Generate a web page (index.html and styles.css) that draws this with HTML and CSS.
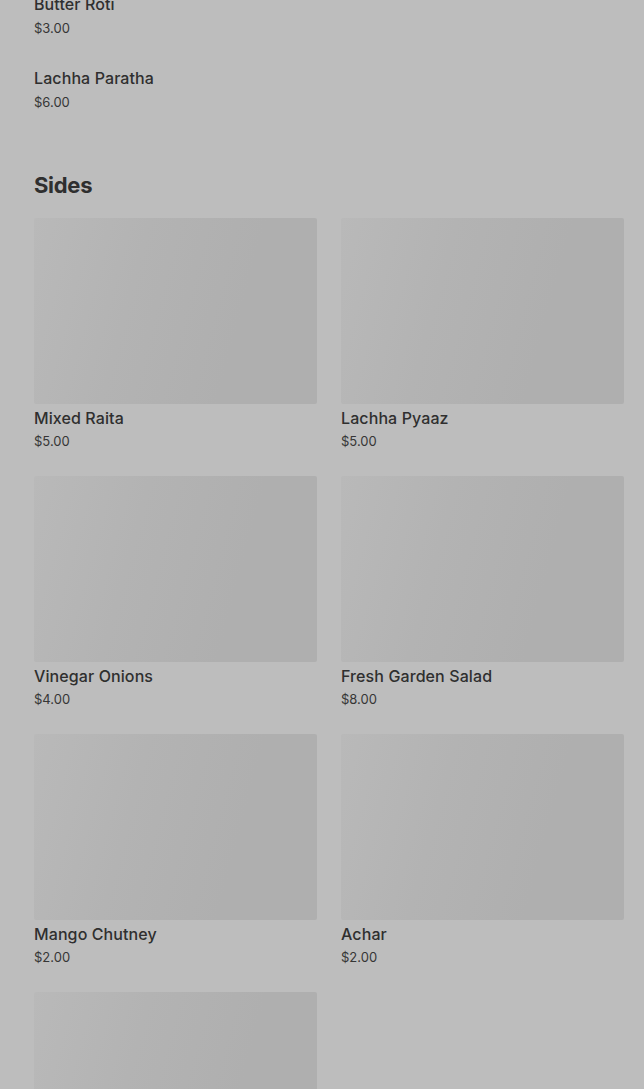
FILE: index.html
```html
<!DOCTYPE html>
<html lang="en">
<head>
  <meta charset="UTF-8">
  <meta name="viewport" content="width=device-width, initial-scale=1.0">
  <title>Menu</title>
  <link rel="stylesheet" href="styles.css">
</head>
<body>
  <div class="menu">
    <ul class="list">
      <li class="list-item">
        <div class="item-name">Butter Roti</div>
        <div class="item-price">$3.00</div>
      </li>
      <li class="list-item">
        <div class="item-name">Lachha Paratha</div>
        <div class="item-price">$6.00</div>
      </li>
    </ul>

    <section class="section">
      <h2 class="section-title">Sides</h2>
      <div class="grid">
        <div class="card">
          <div class="card-image"></div>
          <div class="item-name">Mixed Raita</div>
          <div class="item-price">$5.00</div>
        </div>
        <div class="card">
          <div class="card-image"></div>
          <div class="item-name">Lachha Pyaaz</div>
          <div class="item-price">$5.00</div>
        </div>
        <div class="card">
          <div class="card-image"></div>
          <div class="item-name">Vinegar Onions</div>
          <div class="item-price">$4.00</div>
        </div>
        <div class="card">
          <div class="card-image"></div>
          <div class="item-name">Fresh Garden Salad</div>
          <div class="item-price">$8.00</div>
        </div>
        <div class="card">
          <div class="card-image"></div>
          <div class="item-name">Mango Chutney</div>
          <div class="item-price">$2.00</div>
        </div>
        <div class="card">
          <div class="card-image"></div>
          <div class="item-name">Achar</div>
          <div class="item-price">$2.00</div>
        </div>
        <div class="card">
          <div class="card-image"></div>
        </div>
      </div>
    </section>
  </div>
</body>
</html>
```

FILE: styles.css
```css
body {
  margin: 0;
  background-color: #bdbdbd;
  font-family: Inter, "Noto Sans", sans-serif;
  color: #2f2f2f;
  overflow: hidden;
}

.menu {
  padding: 0 20px 0 34px;
  margin-top: -7px;
}

.list {
  list-style: none;
  margin: 0;
  padding: 0;
}

.list-item {
  height: 74px;
}

.item-name {
  font-size: 16px;
  line-height: 22px;
  font-weight: 500;
  letter-spacing: 0.1px;
}

.item-price {
  font-size: 13px;
  line-height: 18px;
  margin-top: 4px;
  color: #363636;
}

.section {
  margin-top: 29px;
}

.section-title {
  margin: 0 0 18px;
  font-size: 22px;
  line-height: 30px;
  font-weight: 700;
  letter-spacing: -0.3px;
}

.grid {
  display: grid;
  grid-template-columns: 1fr 1fr;
  column-gap: 24px;
  row-gap: 26px;
}

.card .item-name {
  margin-top: 3px;
}

.card .item-price {
  margin-top: 3px;
}

.card-image {
  height: 186px;
  border-radius: 2px;
  background: linear-gradient(105deg, #b9b9b9 0%, #b3b3b3 35%, #afafaf 70%);
}
```
